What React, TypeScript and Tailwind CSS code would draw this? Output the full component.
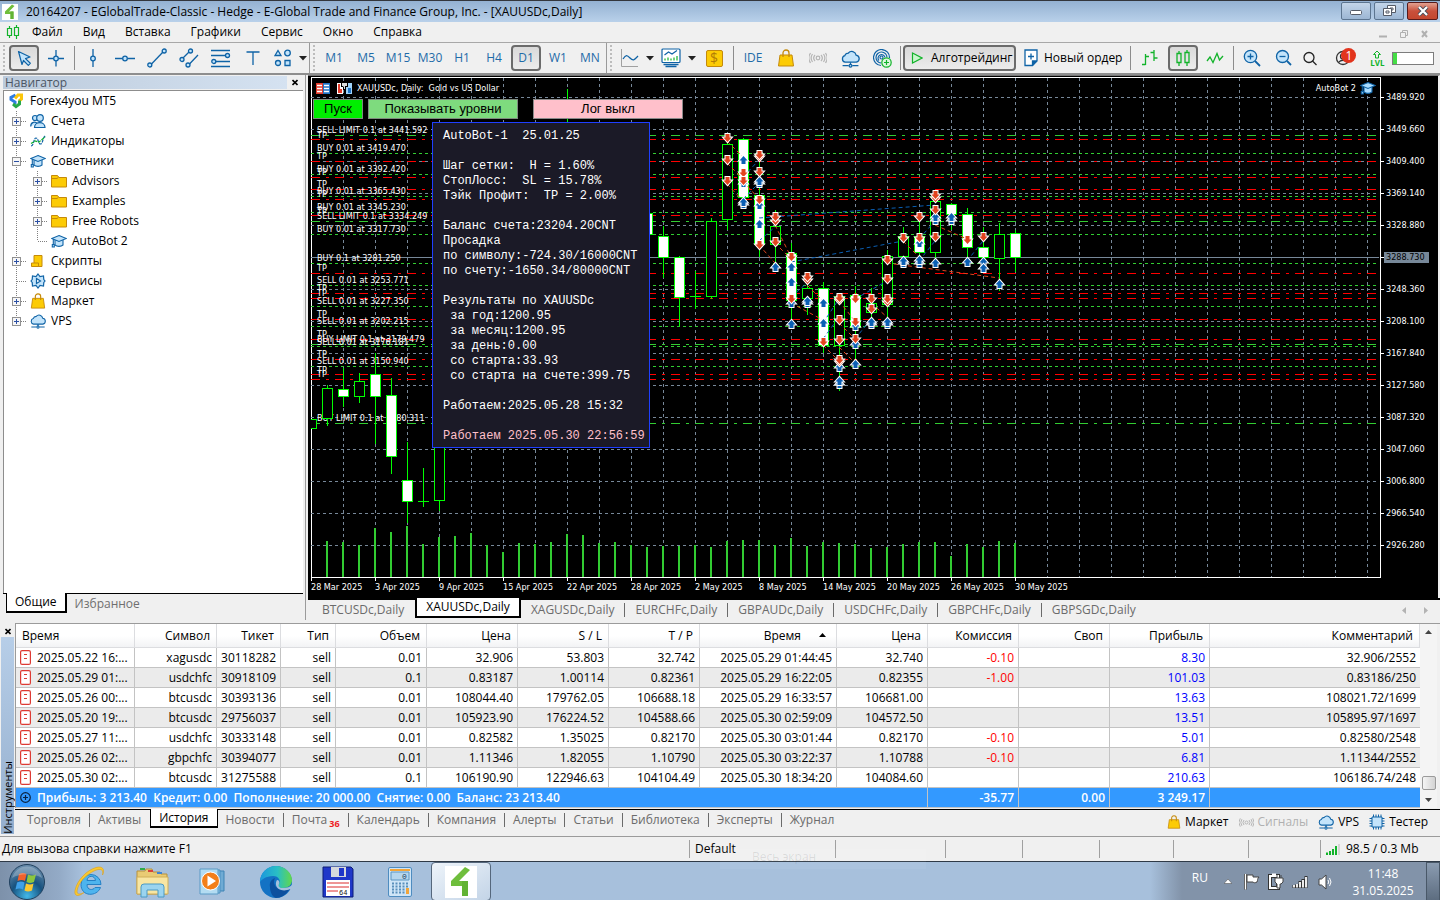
import { useState } from 'react'
import type { ReactNode } from 'react'
import clsx from 'clsx'

const BLUE = '#0f63a6'
const SKY = '#c3e4fb'
const GREEN = '#12b32a'
const GOLD = '#fccb05'
const GOLD_DARK = '#c58a0a'

/* ---------- icons ---------- */

interface IconProps {
  children: ReactNode
  w?: number
  h?: number
  color?: string
  fill?: string
  sw?: number
}

function Icon({ children, w = 18, h = 18, color = BLUE, fill = 'none', sw = 1 }: IconProps) {
  return (
    <svg
      width={w}
      height={h}
      viewBox={`0 0 ${w} ${h}`}
      fill={fill}
      stroke={color}
      strokeWidth={sw}
      className="shrink-0"
      aria-hidden="true"
    >
      {children}
    </svg>
  )
}

const CursorIcon = () => (
  <Icon fill={SKY} sw={1.2}>
    <path d="M3.5 2.5 15 8l-4.5 1.6 4.8 4.7-2 2-4.8-4.8L7 15.5z" strokeLinejoin="round" />
  </Icon>
)

const CrosshairIcon = () => (
  <Icon fill={SKY} sw={1.3}>
    <path d="M1 9.5h5.5M11.5 9.5H17M9 1v6M9 12v5.5" />
    <circle cx="9" cy="9.5" r="2.3" />
  </Icon>
)

const VLineIcon = () => (
  <Icon fill={SKY} sw={1.3}>
    <path d="M9 0v7M9 12v6" />
    <circle cx="9" cy="9.5" r="2.3" />
  </Icon>
)

const HLineIcon = () => (
  <Icon w={20} fill={SKY} sw={1.3}>
    <path d="M0 9.5h7.5M12.5 9.5H20" />
    <circle cx="10" cy="9.5" r="2.3" />
  </Icon>
)

const TrendIcon = () => (
  <Icon w={20} h={20} fill={SKY} sw={1.3}>
    <path d="M4 16.5 16 4" />
    <circle cx="2.8" cy="17" r="2" />
    <circle cx="17.2" cy="3" r="2" />
  </Icon>
)

const ChannelIcon = () => (
  <Icon w={20} h={20} fill={SKY} sw={1.3}>
    <path d="M3 11 11 3M10 16.5 19 7" />
    <circle cx="3" cy="11.5" r="2" />
    <circle cx="11.5" cy="3" r="2" />
    <circle cx="9" cy="17" r="2" />
  </Icon>
)

const FiboIcon = () => (
  <Icon w={20} h={20} fill={SKY} sw={1.3}>
    <path d="M0 2.5h19M0 7.5h14M5 13.5h14M0 18.5h19" />
    <circle cx="16.5" cy="7.5" r="2" />
    <circle cx="2.8" cy="13.5" r="2" />
  </Icon>
)

const ShapesIcon = () => (
  <Icon fill={SKY} sw={1.3}>
    <path d="M4 1.5 7 6.5H1z" />
    <circle cx="13.5" cy="4" r="2.8" />
    <circle cx="4" cy="14" r="2.5" />
    <path d="M11 11.5h5v5h-5z" />
  </Icon>
)

const BagIcon = ({ size = 18 }: { size?: number }) => (
  <svg width={size} height={size} viewBox="0 0 18 18" className="shrink-0" aria-hidden="true">
    <path d="M3 6h12l1.500 11h-15z" fill={GOLD} stroke={GOLD_DARK} />
    <path d="M6 8V4a3 3 0 0 1 6 0v4" fill="none" stroke={GOLD_DARK} strokeWidth="1.3" />
  </svg>
)

const CloudIcon = ({ w = 18 }: { w?: number }) => (
  <svg width={w} height={w} viewBox="0 0 18 18" fill={SKY} stroke={BLUE} strokeWidth="1.2" className="shrink-0" aria-hidden="true">
    <path d="M4 12.500a3.200 3.200 0 0 1-.4-6.200A3.600 3.600 0 0 1 7 3.800a4.200 4.200 0 0 1 7.300 2 3.400 3.400 0 0 1 .2 6.700z" />
    <path d="M9 12.500V15M1.500 15.800h5.800M10.700 15.800h5.800" />
    <circle cx="9" cy="15.800" r="1.300" />
  </svg>
)

const SignalIcon = ({ w = 18 }: { w?: number }) => (
  <svg width={w} height={w} viewBox="0 0 18 18" fill="none" stroke="#b5b5b5" strokeWidth="1.2" className="shrink-0" aria-hidden="true">
    <circle cx="9" cy="9" r="1.8" />
    <path d="M6 6a4.500 4.500 0 0 0 0 6M12 6a4.500 4.500 0 0 1 0 6M3.500 5a7 7 0 0 0 0 8M14.500 5a7 7 0 0 1 0 8M1.500 4a9 9 0 0 0 0 10M16.500 4a9 9 0 0 1 0 10" />
  </svg>
)

const HatIcon = ({ fill = SKY }: { fill?: string }) => (
  <Icon w={16} h={14} fill={fill} sw={1.1}>
    <path d="M4 6v5c2 1.800 6 1.800 8 0V6" />
    <path d="M8 1.500 15.300 4.500 8 7.500.8 4.500z" />
    <path d="M2.300 5v6" />
    <path d="M1.300 10.500h2v2.500h-2z" />
  </Icon>
)

const LogoMark = ({ size }: { size: number }) => (
  <svg width={size} height={size} viewBox="0 0 32 32" className="shrink-0" aria-hidden="true">
    <path d="M0 0h32v32H0z" fill="#fff" />
    <path d="M20 1 25 4 14 15h9v15h-6V20H6v-5z" fill="#6fbe3c" />
    <path d="M17 15h6v15h-6z" fill="#62b334" />
  </svg>
)

const DropArrow = () => (
  <svg width="8" height="5" className="shrink-0" aria-hidden="true">
    <path d="M0 0h8L4 4.500z" fill="#222" />
  </svg>
)

/* ---------- window header ---------- */

const MENU = ['Файл', 'Вид', 'Вставка', 'Графики', 'Сервис', 'Окно', 'Справка']

function TitleBar() {
  return (
    <header className="flex h-[22px] items-center border-t border-[#33363c] bg-linear-to-b from-[#94b1d2] to-[#b9d1ea] pl-0.5">
      <LogoMark size={16} />
      <h1 className="ml-2 grow truncate text-xs">
        20164207 - EGlobalTrade-Classic - Hedge - E-Global Trade and Finance Group, Inc. - [XAUUSDc,Daily]
      </h1>
      <div className="mb-0.5 flex gap-[3px] pr-0.5">
        <button aria-label="Свернуть" className="grid h-[18px] w-[30px] place-items-center rounded-xs border border-[#5c7590] bg-linear-to-b from-[#c3d5e9] to-[#9cb6d3]">
          <svg width="12" height="5" className="mt-1"><rect x=".5" y=".5" width="11" height="4" rx="1" fill="#fff" stroke="#555b66" /></svg>
        </button>
        <button aria-label="Восстановить" className="grid h-[18px] w-[30px] place-items-center rounded-xs border border-[#5c7590] bg-linear-to-b from-[#c3d5e9] to-[#9cb6d3]">
          <svg width="13" height="12" fill="#fff" stroke="#555b66">
            <path d="M4.500.5h8v7h-8zM7 3h3v2H7z" />
            <path d="M.5 3.500h8v7h-8zM3 6h3v2H3z" />
          </svg>
        </button>
        <button aria-label="Закрыть" className="grid h-[18px] w-[31px] place-items-center rounded-xs border border-[#571b1b] bg-linear-to-b from-[#e0a090] via-[#c8503c] to-[#c3472f]">
          <svg width="12" height="10">
            <path d="m2 1 8 8M10 1 2 9" stroke="#474d59" strokeWidth="4" />
            <path d="m2 1 8 8M10 1 2 9" stroke="#fff" strokeWidth="2.2" />
          </svg>
        </button>
      </div>
    </header>
  )
}

function MenuBar() {
  return (
    <nav className="flex h-[21px] items-center border-b border-[#a8a8a8] bg-[#f0f0f0] pl-1.5 text-xs">
      <Icon w={14} h={16} color={GREEN} sw={1.2}>
        <path d="M1.500 4.500h4v7h-4zM3.500 2v2.500M3.500 11.500V14M8.500 3.500h4v8h-4zM10.500 1v2.500M10.500 11.500V15" />
      </Icon>
      <div className="ml-3 flex gap-5">
        {MENU.map((m) => (
          <button key={m}>{m}</button>
        ))}
      </div>
      <div className="ml-auto flex items-center gap-[13px] pt-1 pr-3 text-[#b0b0b0]">
        <button aria-label="Свернуть график"><svg width="8" height="8"><path d="M0 6.500h8" stroke="currentColor" strokeWidth="2" /></svg></button>
        <button aria-label="Восстановить график"><svg width="8" height="8" fill="none" stroke="currentColor"><path d="M2.500 2V.5h5v5H6M.5 2.500h5v5h-5z" /></svg></button>
        <button aria-label="Закрыть график"><svg width="7" height="8"><path d="m1 1 5 6M6 1 1 7" stroke="currentColor" strokeWidth="2" /></svg></button>
      </div>
    </nav>
  )
}

/* ---------- toolbar ---------- */

const PRESSED = 'rounded-sm border-2 border-[#6b6b6b] bg-linear-to-b from-[#d9d9d9] to-[#ececec]'

interface ToolProps {
  label: string
  children: ReactNode
  active?: boolean
  className?: string
}

function Tool({ label, children, active, className = 'w-8' }: ToolProps) {
  return (
    <button aria-label={label} className={clsx('flex h-[26px] shrink-0 items-center justify-center', className)}>
      <span className={clsx('flex h-[26px] w-full items-center justify-center', active && 'mx-px', active && PRESSED)}>
        {children}
      </span>
    </button>
  )
}

const Divider = () => <span className="mx-0.5 h-6 w-px shrink-0 bg-[#8c8c8c]" />

const Grip = () => (
  <span className="flex h-[30px] shrink-0 items-center gap-[3px] pr-[3px]">
    <span className="h-[30px] w-px bg-[#9a9a9a]" />
    <span className="h-[26px] border-l-2 border-dotted border-[#bcbcbc]" />
  </span>
)

const TIMEFRAMES = ['M1', 'M5', 'M15', 'M30', 'H1', 'H4', 'D1', 'W1', 'MN']

function Toolbar() {
  const [frame, setFrame] = useState('D1')

  return (
    <div className="flex h-8 items-center overflow-hidden border-b-2 border-[#8e8e8e] bg-[#f0f0f0] text-xs">
      <span className="mx-[3px] h-[26px] border-l-2 border-dotted border-[#bcbcbc]" />
      <Tool label="Курсор" active><CursorIcon /></Tool>
      <Tool label="Перекрестие"><CrosshairIcon /></Tool>
      <Divider />
      <Tool label="Вертикальная линия"><VLineIcon /></Tool>
      <Tool label="Горизонтальная линия"><HLineIcon /></Tool>
      <Tool label="Трендовая линия"><TrendIcon /></Tool>
      <Tool label="Канал"><ChannelIcon /></Tool>
      <Tool label="Фибоначчи"><FiboIcon /></Tool>
      <Tool label="Текст">
        <Icon w={14} h={14} sw={1.3}><path d="M.5 1h13M7 1v13" /></Icon>
      </Tool>
      <Tool label="Фигуры" className="w-7"><ShapesIcon /></Tool>
      <Tool label="Другие фигуры" className="w-3"><DropArrow /></Tool>
      <Grip />
      {TIMEFRAMES.map((t) => (
        <button
          key={t}
          onClick={() => setFrame(t)}
          className={clsx(
            'mx-px flex h-[26px] w-[30px] shrink-0 items-center justify-center text-[#1f6ba8]',
            t === frame && PRESSED,
          )}
        >
          {t}
        </button>
      ))}
      <Grip />
      <Tool label="Тип графика" className="w-[30px]">
        <Icon>
          <path d="M.5 0v17.500H17" stroke="#a0a0a0" />
          <path d="M2 10C5 5.500 6 6 9 9s4 2.500 8-2" strokeWidth="1.3" />
        </Icon>
      </Tool>
      <Tool label="Выбор типа" className="w-2.5"><DropArrow /></Tool>
      <Tool label="Индикаторы">
        <Icon w={20} h={20} sw={1.2}>
          <rect x="1" y="1" width="18" height="13.500" rx="1" fill="#fff" />
          <path d="m3.500 7 4-3 3.500 2 5-3.500" />
          <path d="M4 12.500v-2M7 12.500v-3M10 12.500v-2M13 12.500v-3M16 12.500V8" stroke={GREEN} />
          <path d="M2.500 16.500h15M4.500 18.500h11" strokeWidth="1.5" />
        </Icon>
      </Tool>
      <Tool label="Выбор индикатора" className="w-2.5"><DropArrow /></Tool>
      <Tool label="Котировки" className="w-[34px]">
        <span className="grid h-[17px] w-[17px] place-items-center rounded-xs border border-[#c58a0a] bg-[#fccb05] text-sm leading-none text-[#b27c05]">$</span>
      </Tool>
      <Divider />
      <button className="w-[34px] shrink-0 text-[#1f6ba8]">IDE</button>
      <Tool label="Маркет"><BagIcon /></Tool>
      <Tool label="Сигналы"><SignalIcon /></Tool>
      <Tool label="VPS"><CloudIcon w={19} /></Tool>
      <Tool label="Копирование">
        <Icon w={19} h={19} sw={1.2}>
          <circle cx="8.500" cy="8.500" r="1.5" />
          <path d="M8 16.500a8 8 0 1 1 8.500-7.500M8 14a5.500 5.500 0 1 1 6-5.500M6 11.500a3.500 3.500 0 1 1 6-3" />
          <circle cx="13.500" cy="13.500" r="4.700" fill="#dff7df" stroke={GREEN} />
          <path d="M13.500 11v5M11 13.500h5" stroke={GREEN} />
        </Icon>
      </Tool>
      <Divider />
      <button className={clsx('flex h-[26px] w-[113px] shrink-0 items-center gap-2 pl-1.5 whitespace-nowrap', PRESSED)}>
        <Icon w={12} h={12} color={GREEN} fill="#c9f7cd" sw={1.2}><path d="M1.500 1 11 6l-9.500 5z" /></Icon>
        Алготрейдинг
      </button>
      <button className="ml-2 flex shrink-0 items-center gap-1.5 whitespace-nowrap">
        <Icon w={14} h={18} fill="#fff" sw={1.3}>
          <path d="M1 1h12v11l-4.500 4.500H1z" />
          <path d="M13 12H8.500v4.500" fill={BLUE} />
          <path d="M7 4.500v6M4 7.500h6" />
        </Icon>
        Новый ордер
      </button>
      <span className="mr-0.5 ml-2 h-6 w-px shrink-0 bg-[#8c8c8c]" />
      <Tool label="Бары" className="w-[34px]">
        <Icon color={GREEN} sw={1.3}><path d="M4.500 5v11M1 15.500h3.500M4.500 7.500H8M13 1v11M9.500 3.500H13M13 9h3.500" /></Icon>
      </Tool>
      <Tool label="Свечи" active>
        <Icon w={16} h={18} color={GREEN} sw={1.3}>
          <path d="M2 4.500h4v9H2zM4 2v2.500M4 13.500V17M10 3.500h4v10h-4zM12 1v2.500M12 13.500V17" />
        </Icon>
      </Tool>
      <Tool label="Линия">
        <Icon w={18} h={14} color={GREEN} sw={1.3}><path d="M1 10 4 6l3 5.500 4-9L13.500 9 17 5" /></Icon>
      </Tool>
      <Divider />
      <Tool label="Увеличить">
        <Icon fill={SKY} sw={1.3}><path d="m12 12 5 5" strokeWidth="1.8" /><circle cx="7.500" cy="7.500" r="6.200" /><path d="M4.500 7.500h6M7.500 4.500v6" /></Icon>
      </Tool>
      <Tool label="Уменьшить" className="w-[31px]">
        <Icon fill={SKY} sw={1.3}><path d="m12 12 4 4" strokeWidth="1.8" /><circle cx="7.500" cy="7.500" r="6" /><path d="M4.500 7.500h6" /></Icon>
      </Tool>
      <Tool label="Поиск" className="w-[22px]">
        <Icon w={16} h={16} color="#222" sw={1.3}><circle cx="7" cy="7.500" r="5" /><path d="m10.500 11 4 4" /></Icon>
      </Tool>
      <Tool label="Уведомления" className="w-11">
        <span className="relative">
          <Icon w={16} h={16} color="#333" sw={1.3}><circle cx="8" cy="8" r="6.500" /><circle cx="8" cy="6.500" r="2.5" /><path d="M3.500 12.500c2-3 7-3 9 0" /></Icon>
          <span className="absolute -top-0.5 left-1.5 grid h-[15px] w-[15px] place-items-center rounded-full bg-[#e2341d] text-xs leading-none text-white">1</span>
        </span>
      </Tool>
      <span className="flex w-6 shrink-0 flex-col items-center text-[8px] leading-[8px] font-bold text-[#12b32a]">
        <Icon w={10} h={9} color={GREEN}><path d="M5 1 1.500 4.500h2V8h3V4.500h2z" /></Icon>
        LVL
      </span>
      <span className="ml-[3px] h-[13px] w-[42px] shrink-0 border border-[#7d7d7d] bg-white">
        <span className="block h-full w-1 bg-[#45dd45]" />
      </span>
    </div>
  )
}

/* ---------- navigator ---------- */

interface TreeNode {
  label: string
  icon: ReactNode
  level: number
  toggle?: '+' | '-'
  last?: boolean
}

const FolderIcon = () => (
  <Icon w={16} h={14} color={GOLD_DARK} fill={GOLD}><path d="M.5 1.500h6l1.500 2h7.500v9.500H.5z" /><path d="M.5 4.500H6l1.500-1.200" /></Icon>
)

const TREE: TreeNode[] = [
  {
    label: 'Счета',
    level: 1,
    toggle: '+',
    icon: (
      <Icon w={16} h={16} fill={SKY} sw={1.2}>
        <circle cx="5" cy="5" r="2.5" />
        <path d="M.7 13.500c0-5 5-5 6.500-3" />
        <circle cx="10" cy="5" r="3.300" />
        <path d="M4.500 14.500c0-6.500 10.500-6.500 10.500 0z" />
      </Icon>
    ),
  },
  {
    label: 'Индикаторы',
    level: 1,
    toggle: '+',
    icon: (
      <Icon w={16} h={14} sw={1.2}>
        <path d="M1 12c3 0 2.500-8 5-8s2 6 4.500 6 2-7 5-8" strokeDasharray="3 1" />
        <path d="M1 9.500 5 7l4 1 6-5" stroke={GREEN} strokeDasharray="3 1" />
      </Icon>
    ),
  },
  { label: 'Советники', level: 1, toggle: '-', icon: <HatIcon /> },
  { label: 'Advisors', level: 2, toggle: '+', icon: <FolderIcon /> },
  { label: 'Examples', level: 2, toggle: '+', icon: <FolderIcon /> },
  { label: 'Free Robots', level: 2, toggle: '+', icon: <FolderIcon /> },
  { label: 'AutoBot 2', level: 2, last: true, icon: <HatIcon /> },
  {
    label: 'Скрипты',
    level: 1,
    toggle: '+',
    icon: <Icon w={16} h={14} color={GOLD_DARK} fill={GOLD}><path d="M4 1.500h8v11H4z" /><path d="M1.500 9h7v3.500h-7z" /></Icon>,
  },
  {
    label: 'Сервисы',
    level: 1,
    icon: (
      <Icon w={16} h={16} fill={SKY} sw={1.2}>
        <path d="m8 1 2 2.500 3.500-.5.300 3.500L15 8l-1.200 1.500-.3 3.500-3.500-.5L8 15l-2-2.500-3.500.5-.3-3.500L1 8l1.200-1.500L2.500 3l3.500.5z" />
        <path d="M6.500 5.500 10.500 8l-4 2.500z" fill="#fff" />
      </Icon>
    ),
  },
  { label: 'Маркет', level: 1, toggle: '+', icon: <BagIcon size={16} /> },
  { label: 'VPS', level: 1, toggle: '+', last: true, icon: <CloudIcon w={16} /> },
]

function Branch({ toggle, last }: { toggle?: '+' | '-'; last?: boolean }) {
  return (
    <svg width="21" height="20" className="shrink-0" shapeRendering="crispEdges" aria-hidden="true">
      <path d={last ? 'M7.500 0v10M7.500 10.500H18' : 'M7.500 0v20M7.500 10.500H18'} stroke="#808080" strokeDasharray="1 1" fill="none" />
      {toggle && (
        <>
          <rect x="3.500" y="6.500" width="8" height="8" fill="#f6f6f6" stroke="#919191" />
          <path d={toggle === '+' ? 'M5 10.500h5M7.500 8v5' : 'M5 10.500h5'} stroke="#2b4fa3" />
        </>
      )}
    </svg>
  )
}

function Navigator() {
  return (
    <aside className="flex w-[306px] shrink-0 flex-col border-r border-[#9b9b9b] bg-[#f0f0f0] pr-0.5 pl-[3px]">
      <div className="flex h-[15px] items-center text-xs leading-none">
        <h2 className="h-[13px] grow bg-linear-to-r from-[#bccbdc] to-[#d5e2f1] pl-0.5 leading-[13px] text-[#4c5664]">Навигатор</h2>
        <button aria-label="Закрыть навигатор" className="grid w-4 place-items-center">
          <svg width="6" height="7"><path d="m.5 1 5 5M5.500 1l-5 5" stroke="#000" strokeWidth="1.6" /></svg>
        </button>
      </div>
      <div className="grow border-t border-l border-[#8d8d8d] bg-white text-xs">
        <div className="flex h-5 items-center gap-[7px] pl-[5px]">
          <svg width="14" height="16" viewBox="0 0 14 16" fill="none" strokeWidth="3" className="shrink-0" aria-hidden="true">
            <path d="M6.500 2 2 4.500v2L6 9v2" stroke="#2f7de0" />
            <path d="M6 5.500 9 2h3.500v4L10 8" stroke="#fbc60b" />
            <path d="M10.500 7.500V11L7 13.500 4 11" stroke="#27a94a" />
          </svg>
          Forex4you MT5
        </div>
        <ul>
          {TREE.map((n) => (
            <li key={n.label} className="flex h-5 items-center pl-[5px]">
              {n.level === 2 && (
                <svg width="21" height="20" className="shrink-0" shapeRendering="crispEdges" aria-hidden="true">
                  <path d="M7.500 0v20" stroke="#808080" strokeDasharray="1 1" />
                </svg>
              )}
              <Branch toggle={n.toggle} last={n.last} />
              {n.icon}
              <span className="ml-[5px]">{n.label}</span>
            </li>
          ))}
        </ul>
      </div>
      <div className="flex h-[27px] items-start border-t border-black pl-[3px] text-xs">
        <button className="-mt-px h-5 border border-t-0 border-r-2 border-b-2 border-black bg-white px-2">Общие</button>
        <button className="h-5 px-2 text-[#6f6f6f]">Избранное</button>
      </div>
    </aside>
  )
}

/* ---------- chart ---------- */

// bar spacing and the first bar's offset inside the plot
const STEP = 16
const FIRST = 16
const PLOT_BOTTOM = 500

// [bar, body top, body bottom, high, low, filled]
type Candle = [number, number, number, number, number, boolean]

const CANDLES: Candle[] = [
  [-1, 342, 351, 342, 351, false],
  [0, 311, 341, 308, 349, false],
  [1, 312, 319, 291, 330, true],
  [2, 304, 319, 296, 326, false],
  [3, 297, 319, 276, 367, true],
  [4, 318, 379, 301, 397, true],
  [5, 403, 424, 365, 446, true],
  [6, 424, 424, 391, 430, false],
  [7, 340, 423, 330, 434, false],
  [15, 60, 120, 12, 130, false],
  [20, 136, 157, 130, 160, true],
  [21, 159, 180, 149, 201, true],
  [22, 180, 220, 179, 249, true],
  [23, 219, 219, 194, 232, false],
  [24, 144, 219, 141, 222, false],
  [25, 67, 142, 58, 153, false],
  [26, 62, 120, 61, 129, true],
  [27, 118, 167, 80, 180, true],
  [28, 149, 167, 133, 193, false],
  [29, 176, 223, 166, 249, true],
  [30, 211, 221, 200, 238, false],
  [31, 211, 268, 205, 276, true],
  [32, 219, 268, 218, 314, false],
  [33, 218, 250, 209, 289, true],
  [34, 226, 235, 211, 250, false],
  [35, 179, 227, 173, 250, false],
  [36, 159, 179, 150, 189, false],
  [37, 159, 175, 140, 188, true],
  [38, 124, 175, 115, 188, false],
  [39, 127, 137, 126, 153, true],
  [40, 137, 170, 131, 188, true],
  [41, 170, 180, 150, 193, true],
  [42, 157, 181, 146, 214, false],
  [43, 156, 180, 153, 195, true],
]

const VOLUMES = [
  36, 35, 32, 49, 45, 51, 33, 40, 41, 44, 32, 25, 34, 33, 35, 43, 42, 34, 35, 32, 30, 31, 31, 32, 30, 36, 37, 37, 32,
  39, 31, 35, 34, 33, 29, 30, 33, 35, 35, 21, 33, 30, 36, 34,
]

const SELLS: [number, number[]][] = [
  [25, [61, 83, 104]],
  [26, [96, 104]],
  [27, [80, 78, 95, 123, 168]],
  [28, [144, 140, 165]],
  [29, [180, 222]],
  [30, [203, 200]],
  [31, [265]],
  [32, [223, 221, 243, 263, 285, 283]],
  [33, [222, 245, 262]],
  [34, [222, 232]],
  [35, [183, 202, 225, 222]],
  [36, [161]],
  [37, [140, 161]],
  [38, [121, 118, 133, 160]],
  [40, [163]],
  [41, [160]],
]

const BUYS: [number, number[]][] = [
  [26, [83, 106, 127, 125]],
  [27, [106, 104, 128, 147]],
  [28, [190]],
  [29, [190, 205, 247, 226]],
  [30, [226, 224]],
  [31, [226, 246]],
  [32, [290, 307, 304]],
  [33, [249, 267, 287]],
  [34, [247, 245]],
  [35, [247, 245]],
  [36, [186, 184]],
  [37, [166, 186, 183]],
  [38, [143, 140, 186]],
  [39, [143, 140]],
  [40, [185]],
  [41, [185, 191]],
  [42, [207]],
]

// [bar from, y from, bar to, y to, buy]
const DEALS: [number, number, number, number, boolean][] = [
  [27, 141, 38, 128, true],
  [29, 185, 36, 164, true],
  [35, 186, 42, 201, false],
  [25, 64, 26, 80, false],
  [25, 86, 26, 102, false],
  [25, 107, 26, 124, false],
  [26, 104, 27, 122, false],
  [26, 100, 27, 83, true],
  [26, 122, 27, 106, true],
  [27, 164, 28, 150, true],
  [27, 168, 28, 186, false],
  [28, 148, 29, 180, false],
  [28, 166, 29, 182, false],
  [29, 220, 30, 206, true],
  [29, 226, 31, 243, false],
  [30, 208, 31, 224, false],
  [31, 246, 32, 222, true],
  [31, 262, 32, 240, true],
  [32, 224, 33, 244, false],
  [32, 246, 33, 262, false],
  [31, 268, 32, 284, false],
  [32, 270, 33, 286, false],
  [33, 222, 35, 204, true],
  [33, 262, 34, 242, true],
  [34, 226, 35, 240, false],
  [36, 164, 37, 180, false],
  [37, 162, 38, 144, true],
  [37, 184, 38, 164, true],
  [38, 148, 40, 162, false],
  [40, 184, 41, 164, true],
]

const LIMITS = [58, 144, 267, 346]
const STOPS = [62, 84, 100, 112, 122, 138, 196, 216, 221, 242, 262, 282, 297, 302]
const ENTRIES = [76, 97, 119, 135, 157, 186, 208, 229, 249, 269, 289]

const ORDER_LABELS: [string, number][] = [
  ['SELL LIMIT 0.1 at 3441.592', 52],
  ['TP', 57],
  ['BUY 0.01 at 3419.470', 70],
  ['TP', 78],
  ['BUY 0.01 at 3392.420', 91],
  ['TP', 94],
  ['TP', 106],
  ['BUY 0.01 at 3365.430', 113],
  ['TP', 116],
  ['BUY 0.01 at 3345.230', 129],
  ['TP', 133],
  ['SELL LIMIT 0.1 at 3334.249', 138],
  ['BUY 0.01 at 3317.730', 151],
  ['BUY 0.1 at 3281.250', 180],
  ['TP', 190],
  ['SELL 0.01 at 3253.771', 202],
  ['TP', 210],
  ['TP', 215],
  ['SELL 0.01 at 3227.350', 223],
  ['TP', 236],
  ['SELL 0.01 at 3202.215', 243],
  ['TP', 256],
  ['BUY LIMIT 0.1 at 3179.479', 261],
  ['SELL 0.01 at 3176.181', 264],
  ['TP', 276],
  ['SELL 0.01 at 3150.940', 283],
  ['TP', 292],
  ['TP', 296],
  ['BUY LIMIT 0.1 at 3080.311', 340],
]

const PRICES = [
  '3489.920', '3449.660', '3409.400', '3369.140', '3328.880', '3288.730', '3248.360', '3208.100',
  '3167.840', '3127.580', '3087.320', '3047.060', '3006.800', '2966.540', '2926.280',
]

const DATES = [
  '28 Mar 2025', '3 Apr 2025', '9 Apr 2025', '15 Apr 2025', '22 Apr 2025', '28 Apr 2025',
  '2 May 2025', '8 May 2025', '14 May 2025', '20 May 2025', '26 May 2025', '30 May 2025',
]

const INFO = [
  'AutoBot-1  25.01.25',
  '',
  'Шаг сетки:  H = 1.60%',
  'СтопЛосс:  SL = 15.78%',
  'Тэйк Профит:  TP = 2.00%',
  '',
  'Баланс счета:23204.20CNT',
  'Просадка',
  'по символу:-724.30/16000CNT',
  'по счету:-1650.34/80000CNT',
  '',
  'Результаты по XAUUSDc',
  ' за год:1200.95',
  ' за месяц:1200.95',
  ' за день:0.00',
  ' со старта:33.93',
  ' со старта на счете:399.75',
  '',
  'Работаем:2025.05.28 15:32',
  '',
]

const barX = (i: number) => FIRST + i * STEP

function Level({ y, color, dash }: { y: number; color: string; dash?: string }) {
  return <line x1="0" x2="100%" y1={y + 0.5} y2={y + 0.5} stroke={color} strokeDasharray={dash} />
}

function Plot() {
  return (
    <svg width="100%" height="500" className="-mt-px -ml-px block" aria-label="XAUUSDc, Daily">
      <g shapeRendering="crispEdges">
        {Array.from({ length: 60 }, (_, i) => (
          <line key={i} x1={32.5 + i * 32} x2={32.5 + i * 32} y1="1" y2={PLOT_BOTTOM} stroke="#778899" strokeDasharray="3 3" />
        ))}
        {PRICES.map((p, i) => (
          <Level key={p} y={20 + i * 32} color="#778899" dash={p === '3288.730' ? undefined : '3 3'} />
        ))}
        {VOLUMES.map((v, i) => (
          <rect key={i} x={barX(i) - 1} y={PLOT_BOTTOM - v} width="2" height={v} fill="#32cd32" />
        ))}
        {ENTRIES.map((y) => <Level key={y} y={y} color="#32cd32" dash="3 3" />)}
        {STOPS.map((y) => <Level key={y} y={y} color="#ff0000" dash="9 6 3 6" />)}
        {LIMITS.map((y) => <Level key={y} y={y} color="#32cd32" dash="9 6 3 6" />)}
      </g>
      <g className="fill-white font-['DejaVu_Sans_Condensed','DejaVu_Sans',sans-serif] text-[9px]">
        {ORDER_LABELS.map(([text, y]) => (
          <text key={`${text}${y}`} x="6" y={y + 4}>{text}</text>
        ))}
      </g>
      <g shapeRendering="crispEdges" stroke="#00ff00">
        {CANDLES.map(([i, top, bottom, high, low, filled]) => (
          <g key={i}>
            <line x1={barX(i) + 0.5} x2={barX(i) + 0.5} y1={high} y2={low} />
            {top === bottom ? (
              <line x1={barX(i) - 5} x2={barX(i) + 6} y1={top + 0.5} y2={top + 0.5} />
            ) : (
              <rect x={barX(i) - 4.5} y={top + 0.5} width="10" height={bottom - top} fill={filled ? '#ffffff' : '#000000'} />
            )}
          </g>
        ))}
      </g>
      <g>
        {DEALS.map(([a, y1, b, y2, buy], i) => (
          <line key={i} x1={barX(a)} y1={y1} x2={barX(b)} y2={y2} stroke={buy ? '#0a5fb4' : '#e2431e'} strokeDasharray="4 3" />
        ))}
      </g>
      <g stroke="#ffffff" strokeWidth="2" paintOrder="stroke">
        {BUYS.flatMap(([i, ys]) =>
          ys.map((y) => (
            <path key={`${i}-${y}`} transform={`translate(${barX(i) + 0.5} ${y})`} d="M0-4 4 .5H2V4H-2V.5H-4z" fill="#0a5fb4" />
          )),
        )}
        {SELLS.flatMap(([i, ys]) =>
          ys.map((y) => (
            <path key={`${i}-${y}`} transform={`translate(${barX(i) + 0.5} ${y})`} d="M0 4 4-.5H2V-4H-2V-.5H-4z" fill="#e2431e" />
          )),
        )}
      </g>
    </svg>
  )
}

function Chart() {
  return (
    <section className="flex grow flex-col border-t border-r-2 border-[#777] border-r-[#f0f0f0] bg-black pt-px pl-[3px] font-['DejaVu_Sans_Condensed','DejaVu_Sans',sans-serif] text-[9px] text-white">
      <div className="flex">
        <div className="relative min-w-0 grow border-t border-r border-b border-white">
          <div className="border-l border-white">
            <Plot />
          </div>
          <div className="absolute top-[3px] left-[5px] flex items-center leading-[14px]">
            <svg width="14" height="11" aria-hidden="true">
              <path d="M0 0h7v11H0z" fill="#e23b2c" />
              <path d="M7 0h7v11H7z" fill="#1f73c4" />
              <path d="M1 2.500h5M1 5.500h5M1 8.500h5M8 2.500h5M8 5.500h5M8 8.500h5" stroke="#fff" strokeWidth="1.5" />
            </svg>
            <svg width="15" height="11" className="ml-[7px]" aria-hidden="true">
              <path d="M0 0h4v4h2v7H0z" fill="#fff" />
              <path d="M1 1h2v5h2v4H1z" fill="#e23b2c" />
              <path d="M9 4h2V0h4v11H9z" fill="#9fd3fa" />
              <path d="M11 5h3v5h-3z" fill="#1f73c4" />
              <path d="M5 0h5v3H8v3H7V3H5z" fill="#ddd" />
            </svg>
            <span className="ml-[5px] whitespace-pre">XAUUSDc, Daily:  Gold vs US Dollar</span>
          </div>
          <div className="absolute top-[3px] right-1 flex items-center gap-1 leading-[14px]">
            AutoBot 2
            <HatIcon fill="#a9dcff" />
          </div>
          <div className="absolute top-[21px] left-0.5 flex font-['Liberation_Sans',sans-serif] text-[13px] leading-[18px] text-black">
            <button className="h-5 w-[50px] border border-[#7e8a7e] bg-[#00ee00]">Пуск</button>
            <button className="ml-[5px] h-5 w-[150px] border border-[#7e8a7e] bg-[#7edb7e]">Показывать уровни</button>
            <button className="ml-[15px] h-5 w-[150px] border border-[#8a8a8a] bg-[#ffc0cb]">Лог выкл</button>
          </div>
          <div className="absolute top-[44px] left-[121px] w-[218px] border border-[#1f3fff] bg-[#1b1a27] pt-1.5 pb-[3px] pl-[10px] font-['Liberation_Mono',monospace] text-xs leading-[15px] whitespace-pre">
            {INFO.map((line, i) => (
              <p key={i} className="h-[15px]">{line}</p>
            ))}
            <p className="h-[15px] text-[#ffc0cb]">Работаем 2025.05.30 22:56:59</p>
          </div>
        </div>
        <ul className="w-[57px] shrink-0 pt-1">
          {PRICES.map((p) => (
            <li key={p} className="flex h-8 items-center">
              <span className="h-px w-[3px] bg-white" />
              <span className={clsx('h-[11px] px-0.5 leading-[11px]', p === '3288.730' && 'bg-[#778899] pr-1 text-black')}>{p}</span>
            </li>
          ))}
        </ul>
      </div>
      <ul className="flex h-5 overflow-hidden">
        {DATES.map((d) => (
          <li key={d} className="w-16 shrink-0 whitespace-nowrap">
            <span className="block h-[3px] w-px bg-white" />
            <span className="block leading-[13px]">{d}</span>
          </li>
        ))}
      </ul>
    </section>
  )
}

const CHART_TABS = [
  'BTCUSDc,Daily', 'XAUUSDc,Daily', 'XAGUSDc,Daily', 'EURCHFc,Daily', 'GBPAUDc,Daily', 'USDCHFc,Daily', 'GBPCHFc,Daily', 'GBPSGDc,Daily',
]

function ChartTabs() {
  const [tab, setTab] = useState('XAUUSDc,Daily')

  return (
    <div className="flex h-[22px] shrink-0 items-center border-t-2 border-black bg-[#f0f0f0] pl-1 text-xs text-[#6b6b6b]">
      {CHART_TABS.map((t, i) => (
        <button
          key={t}
          onClick={() => setTab(t)}
          className={clsx(
            'flex h-5 items-center',
            t === tab ? '-mt-0.5 self-start border-x-2 border-b-2 border-black bg-white px-[9px] text-black' : 'pl-2.5',
          )}
        >
          {t}
          {t !== tab && <span className={clsx('ml-2.5 h-[14px] w-px', i > 1 && i < 7 && 'bg-[#6b6b6b]')} />}
        </button>
      ))}
      <div className="ml-auto flex gap-[18px] pr-3">
        <button aria-label="Назад"><svg width="4" height="7"><path d="M4 0v7L0 3.500z" fill="#b3b3b3" /></svg></button>
        <button aria-label="Вперед"><svg width="4" height="7"><path d="M0 0v7l4-3.500z" fill="#b3b3b3" /></svg></button>
      </div>
    </div>
  )
}

/* ---------- history ---------- */

const HEADERS = ['Время', 'Символ', 'Тикет', 'Тип', 'Объем', 'Цена', 'S / L', 'T / P', 'Время', 'Цена', 'Комиссия', 'Своп', 'Прибыль', 'Комментарий']

const ROWS = [
  ['2025.05.22 16:...', 'xagusdc', '30118282', 'sell', '0.01', '32.906', '53.803', '32.742', '2025.05.29 01:44:45', '32.740', '-0.10', '', '8.30', '32.906/2552'],
  ['2025.05.29 01:...', 'usdchfc', '30918109', 'sell', '0.1', '0.83187', '1.00114', '0.82361', '2025.05.29 16:22:05', '0.82355', '-1.00', '', '101.03', '0.83186/250'],
  ['2025.05.26 00:...', 'btcusdc', '30393136', 'sell', '0.01', '108044.40', '179762.05', '106688.18', '2025.05.29 16:33:57', '106681.00', '', '', '13.63', '108021.72/1699'],
  ['2025.05.20 19:...', 'btcusdc', '29756037', 'sell', '0.01', '105923.90', '176224.52', '104588.66', '2025.05.30 02:59:09', '104572.50', '', '', '13.51', '105895.97/1697'],
  ['2025.05.27 11:...', 'usdchfc', '30333148', 'sell', '0.01', '0.82582', '1.35025', '0.82170', '2025.05.30 03:01:44', '0.82170', '-0.10', '', '5.01', '0.82580/2548'],
  ['2025.05.26 02:...', 'gbpchfc', '30394077', 'sell', '0.01', '1.11346', '1.82055', '1.10790', '2025.05.30 03:22:37', '1.10788', '-0.10', '', '6.81', '1.11344/2552'],
  ['2025.05.30 02:...', 'btcusdc', '31275588', 'sell', '0.1', '106190.90', '122946.63', '104104.49', '2025.05.30 18:34:20', '104084.60', '', '', '210.63', '106186.74/248'],
]

const COMMISSION = 10
const PROFIT = 12
const CELL = 'border-r border-b border-[#c3c3c3] pr-1'

function History() {
  return (
    <table className="w-full min-w-0 grow table-fixed border-separate border-spacing-0 text-right text-xs leading-[19px]">
      <colgroup>
        <col className="w-[119px]" />
        <col className="w-[82px]" />
        <col className="w-[64px]" />
        <col className="w-[55px]" />
        <col className="w-[91px]" />
        <col className="w-[91px]" />
        <col className="w-[91px]" />
        <col className="w-[91px]" />
        <col className="w-[137px]" />
        <col className="w-[91px]" />
        <col className="w-[91px]" />
        <col className="w-[91px]" />
        <col className="w-[100px]" />
        <col />
      </colgroup>
      <thead>
        <tr className="h-6 bg-linear-to-b from-white from-50% to-[#f1f2f4]">
          {HEADERS.map((h, i) => (
            <th
              key={i}
              scope="col"
              className={clsx('border-r border-b border-[#dcdde0] font-normal', i === 0 ? 'pl-1.5 text-left' : 'pr-1.5')}
            >
              {h}
              {i === 8 && (
                <svg width="7" height="4" className="mr-1 mb-1 ml-[18px] inline" aria-label="по возрастанию"><path d="M0 4h7L3.500 0z" /></svg>
              )}
            </th>
          ))}
        </tr>
      </thead>
      <tbody>
        {ROWS.map((row) => (
          <tr key={row[2]} className="h-5 odd:bg-white even:bg-[#ebebeb]">
            {row.map((cell, i) => (
              <td
                key={i}
                className={clsx(
                  CELL,
                  'overflow-hidden whitespace-nowrap last:border-r-0',
                  i === COMMISSION && 'text-[#ff0000]',
                  i === PROFIT && 'text-[#0000ff]',
                )}
              >
                {i === 0 ? (
                  <span className="flex items-center gap-1.5 pl-1">
                    <Icon w={11} h={15} color="#dd3b33" fill="#fff" sw={1.2}>
                      <rect x=".6" y=".6" width="9.800" height="13.800" rx="1.500" />
                      <path d="M4 4.500h3M4 8.500h3" />
                    </Icon>
                    {cell}
                  </span>
                ) : (
                  cell
                )}
              </td>
            ))}
          </tr>
        ))}
      </tbody>
      <tfoot>
        <tr className="h-5 bg-[#3399ff] font-semibold text-white">
          <td colSpan={10} className={clsx(CELL, 'text-left whitespace-pre')}>
            <span className="flex items-center gap-1.5 pl-1">
              <Icon w={11} h={11} color="#0b2340" sw={1.2}><circle cx="5.500" cy="5.500" r="4.800" /><path d="M5.500 3v5M3 5.500h5" /></Icon>
              {'Прибыль: 3 213.40  Кредит: 0.00  Пополнение: 20 000.00  Снятие: 0.00  Баланс: 23 213.40'}
            </span>
          </td>
          <td className={CELL}>-35.77</td>
          <td className={CELL}>0.00</td>
          <td className={CELL}>3 249.17</td>
          <td className="border-b border-[#c3c3c3]" />
        </tr>
      </tfoot>
    </table>
  )
}

const TOOL_TABS = ['Торговля', 'Активы', 'История', 'Новости', 'Почта', 'Календарь', 'Компания', 'Алерты', 'Статьи', 'Библиотека', 'Эксперты', 'Журнал']

function Toolbox() {
  const [tab, setTab] = useState('История')

  return (
    <section className="mt-[3px] flex border-b border-[#9b9b9b] bg-[#f0f0f0]">
      <div className="flex w-[15px] shrink-0 flex-col items-center py-0.5">
        <button aria-label="Закрыть инструменты" className="h-3">
          <svg width="6" height="7"><path d="m.5 1 5 5M5.500 1l-5 5" stroke="#000" strokeWidth="1.6" /></svg>
        </button>
        <div className="flex w-[13px] grow items-center bg-linear-to-b from-[#b7cee8] to-[#94aecd]">
          <h2 className="mt-auto rotate-180 text-[11px] leading-[13px] [writing-mode:vertical-rl]">Инструменты</h2>
        </div>
      </div>
      <div className="flex min-w-0 grow flex-col">
        <div className="flex border-t border-l border-[#9b9b9b]">
          <History />
          <div className="flex w-[17px] shrink-0 flex-col items-center bg-[#f4f4f4] py-1.5">
            <svg width="7" height="4"><path d="M0 4h7L3.500 0z" fill="#444" /></svg>
            <span className="mt-auto mb-2 h-[14px] w-[14px] rounded-xs border border-[#9a9a9a] bg-linear-to-r from-[#f5f5f5] to-[#d3d3d3]" />
            <svg width="7" height="4"><path d="M0 0h7L3.500 4z" fill="#444" /></svg>
          </div>
          <span className="w-[3px] shrink-0" />
        </div>
        <div className="mt-px flex h-[27px] items-start border-t border-black pl-1 text-xs">
          {TOOL_TABS.map((t, i) => (
            <button
              key={t}
              onClick={() => setTab(t)}
              className={clsx(
                'flex h-[19px] items-center',
                t === tab ? '-mt-px border-x border-b-2 border-black bg-white px-2' : 'pl-2 text-[#6b6b6b]',
              )}
            >
              {t}
              {t === 'Почта' && <span className="mt-2 ml-0.5 text-[9px] leading-none font-bold text-[#ee1c25]">36</span>}
              {t !== tab && <span className={clsx('ml-2 h-[14px] w-px', i !== 1 && i !== 11 && 'bg-[#6b6b6b]')} />}
            </button>
          ))}
          <div className="ml-auto flex items-center gap-2.5 pt-1 pr-3">
            <a href="#market" className="flex items-center gap-1"><BagIcon size={14} />Маркет</a>
            <a href="#signals" className="flex items-center gap-1 text-[#b0b0b0]"><SignalIcon w={15} />Сигналы</a>
            <a href="#vps" className="flex items-center gap-1"><CloudIcon w={16} />VPS</a>
            <a href="#tester" className="flex items-center gap-1">
              <Icon w={16} h={16} fill={SKY}>
                <path d="M3 3h10v10H3z" />
                <path d="M4.500 3V.5M7 3V.5M9.500 3V.5M12 3V.5M4.500 15.500V13M7 15.500V13M9.500 15.500V13M12 15.500V13M3 4.500H.5M3 7H.5M3 9.500H.5M3 12H.5M15.500 4.500H13M15.500 7H13M15.500 9.500H13M15.500 12H13" />
              </Icon>
              Тестер
            </a>
          </div>
        </div>
      </div>
    </section>
  )
}

function StatusBar() {
  return (
    <footer className="relative flex h-6 items-center bg-[#f0f0f0] pl-0.5 text-xs">
      <span className="grow">Для вызова справки нажмите F1</span>
      <span className="flex h-[18px] w-[146px] items-center border-l border-[#a0a0a0] pl-[5px]">Default</span>
      <span className="h-[18px] w-[110px] border-l border-[#a0a0a0]" />
      <span className="h-[18px] w-[77px] border-l border-[#a0a0a0]" />
      <span className="h-[18px] w-[77px] border-l border-[#a0a0a0]" />
      <span className="h-[18px] w-[74px] border-l border-[#a0a0a0]" />
      <span className="h-[18px] w-[75px] border-l border-[#a0a0a0]" />
      <span className="h-[18px] w-[72px] border-l border-[#a0a0a0]" />
      <span className="flex h-[18px] w-[120px] items-center gap-1.5 border-l border-[#a0a0a0] pl-[5px]">
        <Icon w={14} h={12} color={GREEN} sw={2}><path d="M1 12V9.500M4 12V8M7 12V6M10 12V3" /><path d="M13 12V1" stroke="#d5d5d5" /></Icon>
        98.5 / 0.3 Mb
      </span>
      <span className="absolute top-3 left-1/2 z-10 h-5 w-[206px] bg-white/5 pl-8 leading-4 text-black/10">Весь экран</span>
    </footer>
  )
}

/* ---------- taskbar ---------- */

const StartOrb = () => (
  <svg width="38" height="38" viewBox="0 0 38 38" aria-hidden="true">
    <defs>
      <radialGradient id="orb" cx=".5" cy=".9" r=".9">
        <stop offset="0" stopColor="#43b8e8" />
        <stop offset=".5" stopColor="#17527f" />
        <stop offset="1" stopColor="#6d8fae" />
      </radialGradient>
    </defs>
    <circle cx="19" cy="19" r="17.500" fill="url(#orb)" stroke="#20405e" />
    <path d="M11 11c3-1.500 5-1.300 7.500 0L17 18c-2.500-1.300-4.500-1.300-7.500 0z" fill="#f0622d" />
    <path d="M20 11.500c3 1.300 5 1.300 8 0L26 19c-3 1.300-5 1.300-7.500 0z" fill="#8cc63f" />
    <path d="M9 19.500c3-1.300 5-1.300 7.500 0L15 26.500c-2.500-1.300-4.500-1.300-7.500 0z" fill="#3fa0e8" />
    <path d="M18 20.500c3 1.300 5 1.300 7.500 0L24 27.500c-3 1.300-5 1.300-7.500 0z" fill="#fdc82f" />
    <path d="M4 15a15.500 15.500 0 0 1 30 0C26 10 12 10 4 15z" fill="#fff" opacity=".25" />
  </svg>
)

const ExplorerE = () => (
  <svg width="32" height="32" viewBox="0 0 32 32" fill="none" aria-hidden="true">
    <path
      d="M7 18.500A10 10 0 1 1 27 18.500H13c0 6 6 6 8 3h5.500C23 31 7 31 7 18.500zM13 14.500h8.500c-.5-5.500-8-5.500-8.500 0z"
      fill="#4db4ee"
      stroke="#2580c5"
      fillRule="evenodd"
    />
    <path d="M28.500 9C30 4 27 2 21 4.500 12 8.500 4 17 3 25c-.3 3.500 3 3.800 7 1.500-6 5-10 3.500-9-2C3 14 13 4 22 1.500c7-1.800 9 2 6.500 7.500z" fill="#f9c931" stroke="#dd9f18" strokeWidth=".6" />
  </svg>
)

const FilesIcon = () => (
  <svg width="34" height="32" viewBox="0 0 34 32" aria-hidden="true">
    <path d="M2 5h8l1-2h6l1 3h7l1 2h6v20H2z" fill="#e9cb74" stroke="#b6913d" />
    <path d="M5 2h5v2H5z" fill="#2faa48" />
    <path d="M13 4h5v2h-5z" fill="#d8413a" />
    <path d="M22 6h5v2h-5z" fill="#3c83d4" />
    <path d="M2 11h31v17H2z" fill="#f8e6a3" stroke="#cfae59" />
    <path d="M6 31V21q0-3 3-3h17q3 0 3 3v10h-6v-7H12v7z" fill="#9bd4ef" stroke="#4a9ac5" />
  </svg>
)

const PlayerIcon = () => (
  <svg width="30" height="28" viewBox="0 0 30 28" aria-hidden="true">
    <path d="M8 3h17v20H8z" fill="#6fabd4" stroke="#3f83b4" />
    <path d="M4 2h17v23H4z" fill="#86bfe3" stroke="#4c90bf" />
    <path d="M1 1h18v25H1z" fill="#b3dcf2" stroke="#5a9bc6" />
    <circle cx="11.500" cy="13" r="9" fill="#f37f19" stroke="#fff" />
    <path d="M8.500 7.500 17 13l-8.500 5.500z" fill="#fff" />
  </svg>
)

const EdgeIcon = () => (
  <svg width="34" height="34" viewBox="0 0 34 34" aria-hidden="true">
    <defs>
      <linearGradient id="edgeTop" x1="0" x2="1">
        <stop offset="0" stopColor="#1b97dd" />
        <stop offset=".55" stopColor="#29bfc4" />
        <stop offset="1" stopColor="#63d84a" />
      </linearGradient>
    </defs>
    <circle cx="17" cy="17" r="16" fill="#1372c4" />
    <path d="M1 17C1 8 8 1 17 1s16 7 16 14c0 5-4 8-9 8-4 0-6-2-4-4 2-3 0-8-6-8-7 0-12 4-13 6z" fill="url(#edgeTop)" />
    <path d="M11 22c-1-5 2-8 5-9-3 5 1 12 8 12 3 0 5-1 7-2-3 7-10 10-14 10-3-1-6-5-6-11z" fill="#0c4f9e" />
    <path d="M18 15c2 0 3 2 2 4s0 4 4 4c4 0 7-1 10-4v5l-3 0c-6 3-13 1-14-4-.3-2 .2-4 1-5z" fill="#a7c0dc" />
  </svg>
)

const FloppyIcon = () => (
  <svg width="32" height="32" viewBox="0 0 32 32" aria-hidden="true">
    <path d="M1 1h28l2 2v28H1z" fill="#1f37c9" stroke="#0c1c76" />
    <path d="M9 1h15v10H9z" fill="#d5d8dc" />
    <path d="M17 2h5v8h-5z" fill="#1f37c9" />
    <path d="M4 14h24v16H4z" fill="#fff" />
    <path d="M5 17h22M5 21h22M5 25h11" stroke="#dc2d2d" />
    <text x="17" y="29" fontSize="7" fontFamily="Liberation Mono" fill="#111">64</text>
  </svg>
)

const CalcIcon = () => (
  <svg width="24" height="30" viewBox="0 0 24 30" aria-hidden="true">
    <rect x=".5" y=".5" width="23" height="29" rx="1.500" fill="#cfe5f7" stroke="#4e8cc0" />
    <path d="M2 2h20v2H2z" fill="#f2a53a" />
    <path d="M3 5h18v8H3z" fill="#b5d6ee" stroke="#5b96c4" />
    <text x="14" y="12" fontSize="8" fontFamily="Liberation Mono" fill="#1d3f63">0</text>
    <path d="M4 16.500h16M4 19.500h16M4 22.500h16M4 25.500h16" stroke="#5a8fbb" strokeWidth="2" strokeDasharray="2 1.500" />
    <path d="M18 21h3v6h-3z" fill="#f2a53a" />
  </svg>
)

const APPS = [
  { name: 'Internet Explorer', icon: <ExplorerE /> },
  { name: 'Проводник', icon: <FilesIcon /> },
  { name: 'Проигрыватель', icon: <PlayerIcon /> },
  { name: 'Microsoft Edge', icon: <EdgeIcon /> },
  { name: 'Total Commander', icon: <FloppyIcon /> },
  { name: 'Калькулятор', icon: <CalcIcon /> },
]

function Taskbar() {
  return (
    <div className="flex h-10 items-center overflow-hidden border-t border-[#2f3a47] bg-[#a7c0dc] text-white">
      <div className="flex h-full w-[59px] shrink-0 items-center bg-linear-to-r from-[#7d91aa] to-[#93aac6] pl-2">
        <button aria-label="Пуск"><StartOrb /></button>
      </div>
      <div className="flex h-full grow items-center bg-linear-to-r from-[#93aac6] to-[#a7c0dc] to-[24px]">
        {APPS.map((a) => (
          <button key={a.name} aria-label={a.name} className="grid w-[62px] place-items-center">{a.icon}</button>
        ))}
        <button aria-label="MetaTrader" className="grid h-full w-[60px] place-items-center rounded-sm border border-[#55677c] bg-linear-to-br from-[#eef4fa] to-[#c3d4e7]">
          <LogoMark size={32} />
        </button>
      </div>
      <div className="flex h-full shrink-0 items-center bg-linear-to-r from-[#a7c0dc] to-[#8293a9] to-[32px] pl-[42px]">
        <span className="mb-2 text-xs">RU</span>
        <button aria-label="Скрытые значки" className="ml-4"><svg width="8" height="5"><path d="M0 4.500h8L4 0z" fill="#fff" stroke="#444" strokeWidth=".5" /></svg></button>
        <svg width="16" height="17" className="ml-3" aria-hidden="true">
          <path d="M1.500 1v15.500" stroke="#333" strokeWidth="3" />
          <path d="M1.500 1v15.500" stroke="#fff" strokeWidth="1.5" />
          <path d="M3 2h6v2h6c-2 2-1 3-2 5-2 1-3 1-4 0H3z" fill="#fff" stroke="#444" />
        </svg>
        <svg width="16" height="17" className="ml-2" aria-hidden="true">
          <path d="M2 3h8v12H2z" fill="none" stroke="#333" strokeWidth="4" />
          <path d="M2 3h8v12H2zM4 1.500h4" fill="none" stroke="#fff" strokeWidth="2" />
          <path d="M7 5h8v4l-2 2h-1v4H9v-4L7 9zM9 2v3M13 2v3" fill="#fff" stroke="#444" />
        </svg>
        <svg width="16" height="13" className="ml-2" aria-hidden="true">
          <path d="M2 13v-3M5 13V9M8 13V6M11 13V4M14 13V1" stroke="#333" strokeWidth="3" />
          <path d="M2 12.500V10M5 12.500V9M8 12.500V7M11 12.500V5M14 12.500V2" stroke="#fff" strokeWidth="1.8" />
        </svg>
        <svg width="14" height="16" className="ml-2.5" aria-hidden="true">
          <path d="M1 5h2.500L8 1v14l-4.500-4H1z" fill="#fff" stroke="#444" />
          <path d="M10 6q1.500 2 0 4M11.500 4q3 4 0 8" stroke="#fff" fill="none" />
        </svg>
        <time className="ml-[18px] block w-[66px] text-center text-xs leading-[17px]">
          11:48
          <br />
          31.05.2025
        </time>
        <button aria-label="Свернуть все окна" className="ml-2.5 h-full w-[14px] border border-[#495868] bg-linear-to-b from-[#8b9cb1] to-[#5d6d80]" />
      </div>
    </div>
  )
}

export default function App() {
  return (
    <div className="flex min-h-screen flex-col overflow-hidden bg-[#f0f0f0] font-['Open_Sans','Noto_Sans',sans-serif] text-black">
      <TitleBar />
      <MenuBar />
      <Toolbar />
      <main className="flex grow">
        <Navigator />
        <div className="flex min-w-0 grow flex-col pl-0.5">
          <Chart />
          <ChartTabs />
        </div>
      </main>
      <Toolbox />
      <StatusBar />
      <Taskbar />
    </div>
  )
}
